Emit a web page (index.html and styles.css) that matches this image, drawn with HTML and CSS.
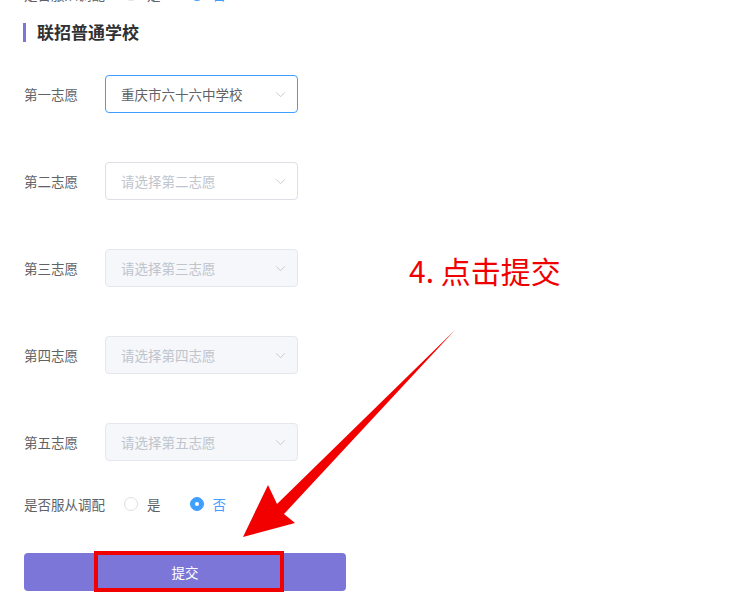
FILE: index.html
```html
<!DOCTYPE html>
<html lang="zh">
<head>
<meta charset="utf-8">
<link rel="stylesheet" href="styles.css">
</head>
<body>
<div class="page">
  <div class="radio-row top-cut">
    <span class="label">是否服从调配</span>
    <span class="radio"><span class="circle"></span><span class="rtext">是</span></span>
    <span class="radio checked"><span class="circle"></span><span class="rtext">否</span></span>
  </div>
  <h2 class="section-title">联招普通学校</h2>
  <div class="form">
    <div class="row">
      <span class="label">第一志愿</span>
      <div class="select active"><span class="value">重庆市六十六中学校</span><svg class="arrow" viewBox="0 0 12 8"><path d="M1 1.5 L6 6.5 L11 1.5" fill="none" stroke="#c0c4cc" stroke-width="1"/></svg></div>
    </div>
    <div class="row">
      <span class="label">第二志愿</span>
      <div class="select"><span class="placeholder">请选择第二志愿</span><svg class="arrow" viewBox="0 0 12 8"><path d="M1 1.5 L6 6.5 L11 1.5" fill="none" stroke="#c0c4cc" stroke-width="1"/></svg></div>
    </div>
    <div class="row">
      <span class="label">第三志愿</span>
      <div class="select disabled"><span class="placeholder">请选择第三志愿</span><svg class="arrow" viewBox="0 0 12 8"><path d="M1 1.5 L6 6.5 L11 1.5" fill="none" stroke="#c0c4cc" stroke-width="1"/></svg></div>
    </div>
    <div class="row">
      <span class="label">第四志愿</span>
      <div class="select disabled"><span class="placeholder">请选择第四志愿</span><svg class="arrow" viewBox="0 0 12 8"><path d="M1 1.5 L6 6.5 L11 1.5" fill="none" stroke="#c0c4cc" stroke-width="1"/></svg></div>
    </div>
    <div class="row">
      <span class="label">第五志愿</span>
      <div class="select disabled"><span class="placeholder">请选择第五志愿</span><svg class="arrow" viewBox="0 0 12 8"><path d="M1 1.5 L6 6.5 L11 1.5" fill="none" stroke="#c0c4cc" stroke-width="1"/></svg></div>
    </div>
    <div class="radio-row">
      <span class="label">是否服从调配</span>
      <span class="radio"><span class="circle"></span><span class="rtext">是</span></span>
      <span class="radio checked"><span class="circle"></span><span class="rtext">否</span></span>
    </div>
    <div class="btn-wrap">
      <button class="submit">提交</button>
      <div class="highlight"></div>
    </div>
  </div>
  <div class="annotation">4. 点击提交</div>
  <svg class="big-arrow" width="733" height="599" viewBox="0 0 733 599">
    <polygon points="455,330 284,514 295,523 243,537 268,485 277,504" fill="#f20000"/>
  </svg>
</div>
</body>
</html>
```
FILE: styles.css
```css
* { box-sizing: border-box; }
html, body { margin: 0; padding: 0; background: #fff; }
body {
  font-family: "Noto Sans CJK SC", "Liberation Sans", sans-serif;
  color: #606266;
  overflow: hidden;
}
.page {
  position: relative;
  width: 733px;
  height: 599px;
  padding-left: 24px;
  overflow: hidden;
}
.label {
  font-size: 13.5px;
  color: #606266;
  width: 81px;
  flex: none;
}
.radio-row {
  display: flex;
  align-items: center;
  height: 20px;
}
.top-cut {
  margin-top: -16px;
}
.radio {
  display: flex;
  align-items: center;
  margin-right: 29px;
  font-size: 13.5px;
  color: #606266;
}
.radio-row .label { width: 100px; }
.circle {
  width: 14px;
  height: 14px;
  border: 1px solid #dcdfe6;
  border-radius: 50%;
  background: #fff;
  margin-right: 9px;
}
.radio.checked .circle {
  background: #409eff;
  border-color: #409eff;
  position: relative;
}
.radio.checked .circle::after {
  content: "";
  position: absolute;
  left: 4px;
  top: 4px;
  width: 4px;
  height: 4px;
  border-radius: 50%;
  background: #fff;
}
.radio.checked .rtext { color: #409eff; }
.section-title {
  margin: 19px 0 0 -1px;
  border-left: 3px solid #7b76d8;
  padding-left: 11px;
  font-size: 17px;
  font-weight: bold;
  color: #303133;
  height: 19px;
  line-height: 18px;
}
.form {
  display: flex;
  flex-direction: column;
  margin-top: 33px;
}
.row {
  display: flex;
  align-items: center;
  height: 38px;
  margin-bottom: 49px;
}
.select {
  width: 193px;
  height: 38px;
  border: 1px solid #dcdfe6;
  border-radius: 4px;
  display: flex;
  align-items: center;
  padding: 0 11px 0 15px;
  background: #fff;
  font-size: 13.5px;
}
.select.active { border-color: #409eff; }
.select.disabled { background: #f5f7fa; border-color: #e4e7ed; }
.value { color: #606266; flex: 1; }
.placeholder { color: #c0c4cc; flex: 1; }
.arrow { width: 11px; height: 7px; }
.form .radio-row { margin-top: -16px; }
.btn-wrap {
  position: relative;
  margin-top: 39px;
  width: 322px;
}
.submit {
  display: block;
  width: 322px;
  height: 38px;
  border: none;
  border-radius: 4px;
  background: #7b76d8;
  color: #fff;
  font-family: inherit;
  font-size: 13.5px;
  padding: 0;
}
.highlight {
  position: absolute;
  left: 70px;
  top: -2px;
  width: 190px;
  height: 41px;
  border: 4px solid #f00000;
}
.annotation {
  position: absolute;
  left: 409px;
  top: 251px;
  font-size: 30px;
  color: #f00000;
  font-family: "Noto Sans CJK SC", sans-serif;
  line-height: 38px;
}
.big-arrow {
  position: absolute;
  left: 0;
  top: 0;
  pointer-events: none;
}
```
